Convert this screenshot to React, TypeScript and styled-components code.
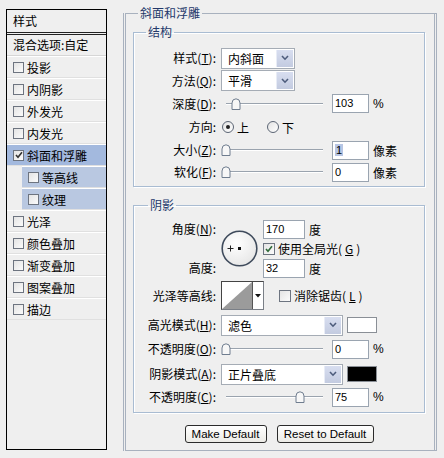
import React from "react";
import styled, { createGlobalStyle } from "styled-components";

const GlobalStyle = createGlobalStyle`
  html, body {
    margin: 0;
    padding: 0;
    background: #efefef;
  }
  body {
    font-family: "Noto Sans CJK SC", "Liberation Sans", sans-serif;
    font-size: 12px;
    color: #000;
  }
`;

const Window = styled.div`
  display: flex;
  align-items: flex-start;
  width: 444px;
  height: 458px;
  background: #efefef;
  overflow: hidden;
`;

/* ---------- left list ---------- */

const Sidebar = styled.div`
  margin: 9px 0 0 6px;
  width: 101px;
  height: 441px;
  box-sizing: border-box;
  border: 1px solid #000;
  display: flex;
  flex-direction: column;
  flex-shrink: 0;
`;

const SideHeader = styled.div`
  height: 25px;
  line-height: 22px;
  padding-left: 6px;
  box-sizing: border-box;
  border-bottom: 3px double #222;
`;

const SideBlend = styled.div`
  height: 21px;
  line-height: 20px;
  padding-left: 6px;
  box-sizing: border-box;
  border-bottom: 1px solid #d6d6d6;
`;

const SideItem = styled.div<{ $selected?: boolean; $sub?: boolean }>`
  display: flex;
  align-items: center;
  gap: 3px;
  height: 22px;
  box-sizing: border-box;
  border-top: 1px solid #fff;
  border-bottom: 1px solid #e0e0e0;
  margin-left: ${(p) => (p.$sub ? "15px" : "0")};
  padding-left: 6px;
  background: ${(p) => (p.$selected ? "#a3b9de" : p.$sub ? "#b9c8e1" : "transparent")};
  white-space: nowrap;
`;

const Box = styled.span<{ $size?: number }>`
  display: inline-flex;
  align-items: center;
  justify-content: center;
  width: ${(p) => p.$size ?? 11}px;
  height: ${(p) => p.$size ?? 11}px;
  box-sizing: border-box;
  border: 1px solid #6d7480;
  background: linear-gradient(135deg, #e4e4e4, #fbfbfb);
  flex-shrink: 0;
`;

const Check = ({ checked, size, color }: { checked?: boolean; size?: number; color?: string }) => (
  <Box $size={size}>
    {checked && (
      <svg width="8" height="8" viewBox="0 0 8 8">
        <path d="M1 4 L3 6.3 L7 1.2" fill="none" stroke={color ?? "#333"} strokeWidth="1.6" />
      </svg>
    )}
  </Box>
);

/* ---------- right panel ---------- */

const OuterGroup = styled.fieldset`
  margin: 6px 0 0 16px;
  width: 314px;
  height: 445px;
  box-sizing: border-box;
  padding: 5px 9px 0 7px;
  border-left: 3px double #a8b1be;
  border-right: 3px double #a8b1be;
  border-top: 1px solid #a8b1be;
  border-bottom: 1px solid #a8b1be;
  min-width: 0;
`;

const Legend = styled.legend<{ $indent: number }>`
  margin-left: ${(p) => p.$indent}px;
  padding: 0 2px;
  line-height: 14px;
  font-size: 12px;
  color: #23386a;
`;

const Group = styled.fieldset<{ $pt: number; $pb: number }>`
  margin: 0;
  padding: ${(p) => p.$pt}px 0 ${(p) => p.$pb}px 0;
  border: 1px solid #a9bcd2;
  box-shadow: 1px 1px 0 #fff, inset 1px 1px 0 #fff;
  min-width: 0;

  & + & {
    margin-top: 11px;
  }
`;

const Row = styled.div<{ $h: number }>`
  display: flex;
  align-items: center;
  height: ${(p) => p.$h}px;
`;

const Label = styled.span`
  width: 82px;
  margin-right: 5px;
  text-align: right;
  white-space: nowrap;
  flex-shrink: 0;
  line-height: 14px;
`;

const Select = styled.div<{ $w: number }>`
  display: flex;
  align-items: center;
  justify-content: space-between;
  width: ${(p) => p.$w}px;
  height: 21px;
  box-sizing: border-box;
  border: 1px solid #a5acb5;
  background: #fff;
  padding: 1px 1px 1px 6px;
`;

const DropBtn = styled.span`
  display: flex;
  align-items: center;
  justify-content: center;
  width: 16px;
  height: 100%;
  background: linear-gradient(#d8def0, #c3cbe0);
  border-left: 1px solid #e8ecf6;
`;

const Chevron = () => (
  <svg width="8" height="6" viewBox="0 0 8 6">
    <path d="M1 1 L4 4.2 L7 1" fill="none" stroke="#4d5c7c" strokeWidth="1.6" />
  </svg>
);

const Dropdown = ({ value, width }: { value: string; width: number }) => (
  <Select $w={width}>
    <span>{value}</span>
    <DropBtn>
      <Chevron />
    </DropBtn>
  </Select>
);

const Track = styled.div`
  position: relative;
  width: 102px;
  height: 14px;
  flex-shrink: 0;

  &::before {
    content: "";
    position: absolute;
    left: 5px;
    right: 0;
    top: 6px;
    border-top: 1px solid #9aa3ae;
    border-bottom: 1px solid #fff;
  }
`;

const ThumbMark = styled.svg`
  position: absolute;
  top: 1px;
`;

const Slider = ({ frac }: { frac: number }) => (
  <Track>
    <ThumbMark width="10" height="12" viewBox="0 0 10 12" style={{ left: `${Math.round(frac * 98)}px` }}>
      <path d="M1 11.5 V5 Q1 1 5 0.8 Q9 1 9 5 V11.5 Z" fill="#f7f7f7" stroke="#6f7d8f" strokeWidth="1" />
    </ThumbMark>
  </Track>
);

const Input = styled.div<{ $w: number; $ml: number }>`
  width: ${(p) => p.$w}px;
  height: 19px;
  margin-left: ${(p) => p.$ml}px;
  box-sizing: border-box;
  border: 1px solid #9aa4b0;
  background: #fff;
  padding-left: 2px;
  font-family: "Liberation Sans", sans-serif;
  font-size: 11px;
  line-height: 17px;
  flex-shrink: 0;
`;

const Selected = styled.span`
  background: #b7c5e3;
  padding: 0 1px;
`;

const Unit = styled.span`
  margin-left: 4px;
  white-space: nowrap;
`;

const Pct = styled.span`
  margin-left: 4px;
  font-family: "Liberation Sans", sans-serif;
  font-size: 12px;
`;

const Radio = styled.span<{ $on?: boolean }>`
  display: inline-flex;
  align-items: center;
  justify-content: center;
  width: 12px;
  height: 12px;
  box-sizing: border-box;
  border: 1px solid #5b6574;
  border-radius: 50%;
  background: linear-gradient(135deg, #e2e2e2, #fff);
  margin-right: 3px;

  &::after {
    content: "";
    width: 4px;
    height: 4px;
    border-radius: 50%;
    background: ${(p) => (p.$on ? "#222" : "transparent")};
  }
`;

const RadioOption = styled.span<{ $gap: number }>`
  display: inline-flex;
  align-items: center;
  margin-left: ${(p) => p.$gap}px;
`;

const AngleGrid = styled.div`
  display: grid;
  grid-template-columns: 82px 37px auto;
  grid-template-rows: 20px 19px 20px;
  column-gap: 5px;
  align-items: center;
`;

const GridLabel = styled(Label)<{ $row: number }>`
  grid-column: 1;
  grid-row: ${(p) => p.$row};
  margin-right: 0;
`;

const Dial = styled.svg`
  grid-column: 2;
  grid-row: 1 / 4;
`;

const GridCell = styled.div<{ $row: number }>`
  grid-column: 3;
  grid-row: ${(p) => p.$row};
  display: flex;
  align-items: center;
  gap: 4px;
  white-space: nowrap;
`;

const ContourBox = styled.div`
  display: flex;
  height: 29px;
  box-sizing: border-box;
  border: 1px solid #7a7f87;
  border-top-color: #444;
  border-left-color: #444;
  background: #fff;
`;

const ContourArrow = styled.span`
  display: flex;
  align-items: center;
  justify-content: center;
  width: 10px;
  border-left: 1px solid #555;
  background: #fff;
`;

const OptionLabel = styled.span<{ $ml?: number }>`
  display: inline-flex;
  align-items: center;
  gap: 3px;
  margin-left: ${(p) => p.$ml ?? 0}px;
  white-space: nowrap;
`;

const Swatch = styled.span<{ $color: string }>`
  width: 30px;
  height: 16px;
  margin-left: 4px;
  box-sizing: border-box;
  border: 1px solid #8a8f96;
  background: ${(p) => p.$color};
`;

const ButtonBar = styled.div`
  display: flex;
  justify-content: center;
  gap: 10px;
  margin-top: 12px;
`;

const Button = styled.button<{ $w: number }>`
  width: ${(p) => p.$w}px;
  height: 18px;
  padding: 0;
  border: 1px solid #2b2b2b;
  border-radius: 3px;
  background: linear-gradient(#ffffff, #ecebe6);
  font-family: "Liberation Sans", sans-serif;
  font-size: 11.5px;
  color: #000;
  line-height: 16px;
`;

const sideItems: { name: string; checked?: boolean; selected?: boolean; sub?: boolean }[] = [
  { name: "投影" },
  { name: "内阴影" },
  { name: "外发光" },
  { name: "内发光" },
  { name: "斜面和浮雕", checked: true, selected: true },
  { name: "等高线", sub: true },
  { name: "纹理", sub: true },
  { name: "光泽" },
  { name: "颜色叠加" },
  { name: "渐变叠加" },
  { name: "图案叠加" },
  { name: "描边" },
];

export default function App() {
  return (
    <>
      <GlobalStyle />
      <Window>
        <Sidebar>
          <SideHeader>样式</SideHeader>
          <SideBlend>混合选项:自定</SideBlend>
          {sideItems.map((it) => (
            <SideItem key={it.name} $selected={it.selected} $sub={it.sub}>
              <Check checked={it.checked} />
              <span>{it.name}</span>
            </SideItem>
          ))}
        </Sidebar>

        <OuterGroup>
          <Legend $indent={5}>斜面和浮雕</Legend>

          <Group $pt={8} $pb={3}>
            <Legend $indent={12}>结构</Legend>
            <Row $h={22}>
              <Label>
                样式(<u>T</u>):
              </Label>
              <Dropdown value="内斜面" width={74} />
            </Row>
            <Row $h={23}>
              <Label>
                方法(<u>Q</u>):
              </Label>
              <Dropdown value="平滑" width={74} />
            </Row>
            <Row $h={23}>
              <Label>
                深度(<u>D</u>):
              </Label>
              <Slider frac={0.103} />
              <Input $w={37} $ml={9}>103</Input>
              <Pct>%</Pct>
            </Row>
            <Row $h={24}>
              <Label>方向:</Label>
              <RadioOption $gap={1}>
                <Radio $on />上
              </RadioOption>
              <RadioOption $gap={18}>
                <Radio />下
              </RadioOption>
            </Row>
            <Row $h={22}>
              <Label>
                大小(<u>Z</u>):
              </Label>
              <Slider frac={0} />
              <Input $w={37} $ml={9}>
                <Selected>1</Selected>
              </Input>
              <Unit>像素</Unit>
            </Row>
            <Row $h={22}>
              <Label>
                软化(<u>F</u>):
              </Label>
              <Slider frac={0} />
              <Input $w={37} $ml={9}>0</Input>
              <Unit>像素</Unit>
            </Row>
          </Group>

          <Group $pt={7} $pb={5}>
            <Legend $indent={14}>阴影</Legend>
            <AngleGrid>
              <GridLabel $row={1}>
                角度(<u>N</u>):
              </GridLabel>
              <Dial width="37" height="37" viewBox="0 0 37 37">
                <defs>
                  <radialGradient id="dialFill" cx="40%" cy="35%" r="70%">
                    <stop offset="0" stopColor="#ffffff" />
                    <stop offset="1" stopColor="#e6e6e6" />
                  </radialGradient>
                </defs>
                <circle cx="18.5" cy="18.5" r="17.3" fill="url(#dialFill)" stroke="#3f4b5c" strokeWidth="1.6" />
                <path d="M9.5 15.5 V21.5 M6.5 18.5 H12.5" stroke="#222" strokeWidth="1" />
                <rect x="17" y="17" width="3" height="3" fill="#111" />
              </Dial>
              <GridCell $row={1}>
                <Input $w={42} $ml={0}>170</Input>
                <span>度</span>
              </GridCell>
              <GridCell $row={2}>
                <OptionLabel>
                  <Check checked size={12} color="#2f6a3a" />
                  使用全局光(<u>G</u>)
                </OptionLabel>
              </GridCell>
              <GridLabel $row={3}>高度:</GridLabel>
              <GridCell $row={3}>
                <Input $w={42} $ml={0}>32</Input>
                <span>度</span>
              </GridCell>
            </AngleGrid>

            <Row $h={35}>
              <Label>光泽等高线:</Label>
              <ContourBox>
                <svg width="30" height="27" viewBox="0 0 30 27">
                  <polygon points="0,27 30,0 30,27" fill="#9b9b9b" />
                </svg>
                <ContourArrow>
                  <svg width="6" height="4" viewBox="0 0 6 4">
                    <polygon points="0,0 6,0 3,3.5" fill="#111" />
                  </svg>
                </ContourArrow>
              </ContourBox>
              <OptionLabel $ml={15}>
                <Check size={12} />
                消除锯齿(<u>L</u>)
              </OptionLabel>
            </Row>
            <Row $h={24}>
              <Label>
                高光模式(<u>H</u>):
              </Label>
              <Dropdown value="滤色" width={122} />
              <Swatch $color="#ffffff" />
            </Row>
            <Row $h={24}>
              <Label>
                不透明度(<u>O</u>):
              </Label>
              <Slider frac={0} />
              <Input $w={37} $ml={9}>0</Input>
              <Pct>%</Pct>
            </Row>
            <Row $h={26}>
              <Label>
                阴影模式(<u>A</u>):
              </Label>
              <Dropdown value="正片叠底" width={122} />
              <Swatch $color="#000000" />
            </Row>
            <Row $h={20}>
              <Label>
                不透明度(<u>C</u>):
              </Label>
              <Slider frac={0.75} />
              <Input $w={37} $ml={9}>75</Input>
              <Pct>%</Pct>
            </Row>
          </Group>

          <ButtonBar>
            <Button $w={82}>Make Default</Button>
            <Button $w={97}>Reset to Default</Button>
          </ButtonBar>
        </OuterGroup>
      </Window>
    </>
  );
}
